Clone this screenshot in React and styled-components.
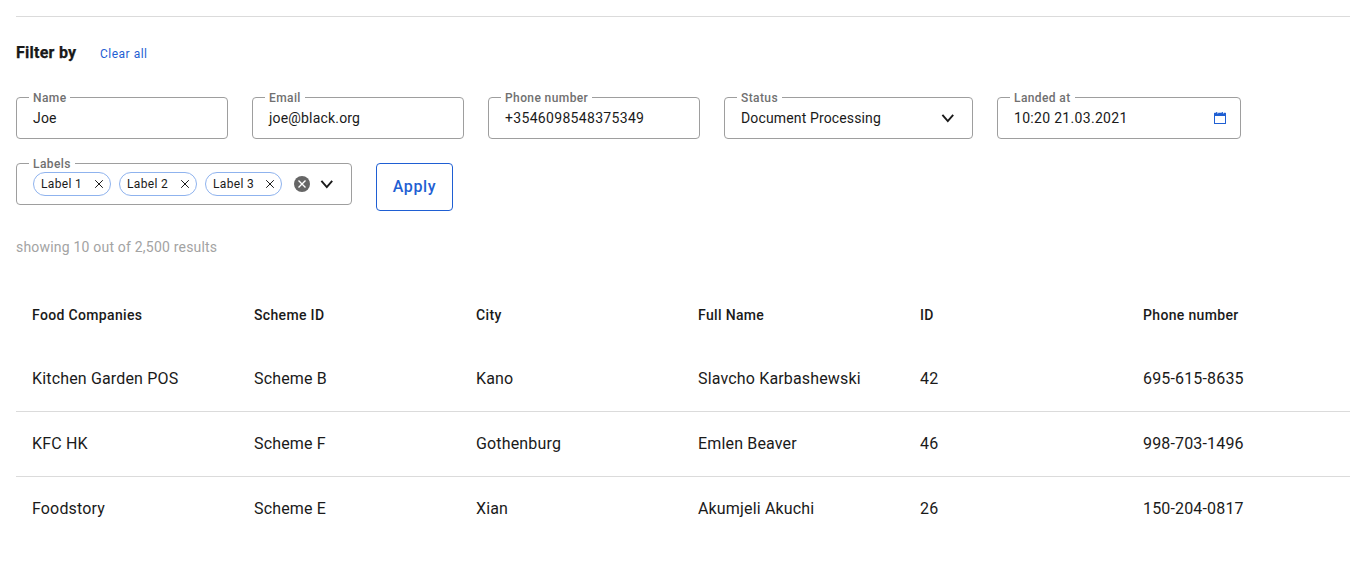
import React from "react";
import styled, { createGlobalStyle } from "styled-components";

const Global = createGlobalStyle`
  * { box-sizing: border-box; }
  body { margin: 0; background: #fff; color: #1a1a1a; font-family: Roboto, sans-serif; overflow: hidden; }
`;
const Page = styled.main`padding: 16px;`;
const Rule = styled.hr`margin: 0; border: 0; border-top: 1px solid #dbdbdb;`;
const Heading = styled.div`display: flex; align-items: center; gap: 24px; height: 24px; margin-top: 24px;`;
const Title = styled.h2`
  margin: 0; width: 60px; white-space: nowrap; font-size: 16px; line-height: 24px; font-weight: 700;
  letter-spacing: 0.25px; -webkit-text-stroke: 0.25px #141414;
`;
const Clear = styled.a`font-size: 12px; line-height: 16px; letter-spacing: 0.5px; color: #1f5fd3; padding-top: 2px;`;
const Filters = styled.div`display: flex; flex-wrap: wrap; gap: 24px; margin-top: 32px; align-items: flex-start;`;
const Field = styled.fieldset`
  position: relative; margin: 0; min-width: 0; border: 1px solid #9e9e9e; border-radius: 4px;
  width: ${(p) => p.$w}px; height: 42px; padding: 0 ${(p) => p.$right || 16}px 0 16px;
  display: flex; align-items: center; justify-content: space-between;
  font-size: 14px; letter-spacing: ${(p) => p.$tracking ?? 0.2}px;
`;
const Label = styled.span`
  position: absolute; top: -8px; left: 12px; padding: 0 4px; background: #fff; color: #707070;
  font-size: 12px; line-height: 16px; font-weight: 500; letter-spacing: 0.4px; white-space: nowrap;
`;
const Chips = styled.div`display: flex; gap: 8px;`;
const Chip = styled.span`
  display: flex; align-items: center; justify-content: space-between; width: ${(p) => p.$w}px; height: 24px;
  padding: 0 6px 0 7px; border: 1px solid #8fb3ee; border-radius: 12px; font-size: 12px; letter-spacing: 0.35px;
`;
const Controls = styled.div`display: flex; align-items: center; gap: 9px;`;
const Apply = styled.button`
  width: 77px; height: 48px; padding: 0 0 2px; border: 1px solid #1f5fd3; border-radius: 4px; background: #fff;
  color: #1f5fd3; font: 500 16px Roboto, sans-serif; letter-spacing: 0.65px;
`;
const Summary = styled.p`margin: 26px 0 0; font-size: 14px; line-height: 20px; letter-spacing: 0.2px; color: #a3a3a3;`;
const Table = styled.table`width: 100%; margin-top: 26px; border-collapse: separate; border-spacing: 0; table-layout: fixed;`;
const Head = styled.th`
  width: ${(p) => p.$w}px; height: 64px; padding: 0 16px; text-align: left;
  font-size: 14px; font-weight: 500; letter-spacing: 0.34px;
`;
const Cell = styled.td`
  height: 65px; padding: 0 16px 2px; font-size: 16px; letter-spacing: 0.16px;
  border-bottom: 1px solid ${(p) => (p.$last ? "transparent" : "#dbdbdb")};
`;

const Chevron = () => (
  <svg width="16" height="16" viewBox="0 0 16 16" fill="none" stroke="#1a1a1a" strokeWidth="1.9"><path d="M2.4 4.8 7.8 11 13.2 4.8" /></svg>
);
const Close = () => (
  <svg width="10" height="10" viewBox="0 0 10 10" fill="none" stroke="#1a1a1a" strokeWidth="1"><path d="m1.2 1.2 7.6 7.6M8.8 1.2 1.2 8.8" /></svg>
);
const ClearIcon = () => (
  <svg width="16" height="16" viewBox="0 0 16 16"><circle cx="8" cy="8" r="8" fill="#666" /><path d="m4.5 4.5 7 7m0-7-7 7" stroke="#fff" strokeWidth="1.4" /></svg>
);
const Calendar = () => (
  <svg width="12" height="12" viewBox="0 0 12 12" fill="#1f5fd3">
    <path fillRule="evenodd" d="M0 1.4Q0 .8 .6 .8H2.2V0H3.3V1.5H4.2V.8H7.8V0H8.9V1.5H9.8V.8H11.4Q12 .8 12 1.4V11.4Q12 12 11.4 12H.6Q0 12 0 11.4ZM1 4V11H11V4Z" />
  </svg>
);

const fields = [
  ["Name", "Joe", 0.2],
  ["Email", "joe@black.org", 0.18],
  ["Phone number", "+3546098548375349", 0.32],
];
const columns = [["Food Companies", 222], ["Scheme ID", 222], ["City", 222], ["Full Name", 222], ["ID", 223], ["Phone number", 223]];
const rows = [
  ["Kitchen Garden POS", "Scheme B", "Kano", "Slavcho Karbashewski", "42", "695-615-8635"],
  ["KFC HK", "Scheme F", "Gothenburg", "Emlen Beaver", "46", "998-703-1496"],
  ["Foodstory", "Scheme E", "Xian", "Akumjeli Akuchi", "26", "150-204-0817"],
];

export default function App() {
  return (
    <Page>
      <Global />
      <Rule />
      <Heading><Title>Filter by</Title><Clear>Clear all</Clear></Heading>
      <Filters>
        {fields.map(([l, v, t]) => <Field key={l} $w={212} $tracking={t}><Label>{l}</Label>{v}</Field>)}
        <Field $w={249} $tracking={0.14}><Label>Status</Label>Document Processing<Chevron /></Field>
        <Field $w={244} $right={14} $tracking={0.31}><Label>Landed at</Label>10:20 21.03.2021<Calendar /></Field>
        <Field $w={336}>
          <Label>Labels</Label>
          <Chips>{[78, 78, 77].map((w, i) => <Chip key={i} $w={w}>Label {i + 1}<Close /></Chip>)}</Chips>
          <Controls><ClearIcon /><Chevron /></Controls>
        </Field>
        <Apply>Apply</Apply>
      </Filters>
      <Summary>showing 10 out of 2,500 results</Summary>
      <Table>
        <thead><tr>{columns.map(([h, w]) => <Head key={h} $w={w}>{h}</Head>)}</tr></thead>
        <tbody>{rows.map((r, i) => <tr key={r[0]}>{r.map((c) => <Cell key={c} $last={i === rows.length - 1}>{c}</Cell>)}</tr>)}</tbody>
      </Table>
    </Page>
  );
}
